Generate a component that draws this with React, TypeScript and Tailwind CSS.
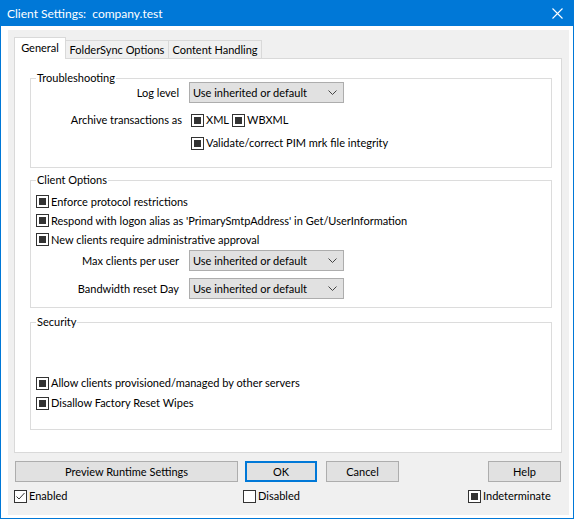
import React from "react";

const FONT = { fontFamily: '"Segoe UI", Lato, sans-serif' };

function Box({ state }: { state: "ind" | "checked" | "empty" }) {
  return (
    <span className="w-[13px] h-[13px] border border-[#333333] bg-white flex items-center justify-center shrink-0">
      {state === "ind" && <span className="w-[7px] h-[7px] bg-[#333333]" />}
      {state === "checked" && (
        <svg width="11" height="11" viewBox="0 0 11 11">
          <path d="M1.5 5.5 L4 8 L9.5 2" stroke="#333333" strokeWidth="1" fill="none" />
        </svg>
      )}
    </span>
  );
}

function Check({ label, state = "ind" }: { label: string; state?: "ind" | "checked" | "empty" }) {
  return (
    <div className="flex items-center h-[20px]">
      <Box state={state} />
      <span className="ml-[2px] whitespace-nowrap">{label}</span>
    </div>
  );
}

function Select() {
  return (
    <div className="w-[155px] h-[21px] bg-[#e1e1e1] border border-[#adadad] flex items-center pl-[3px] pr-[6px]">
      <span className="flex-1 whitespace-nowrap">Use inherited or default</span>
      <svg width="9" height="5" viewBox="0 0 9 5">
        <path d="M0.5 0.5 L4.5 4.5 L8.5 0.5" stroke="#444444" strokeWidth="1" fill="none" />
      </svg>
    </div>
  );
}

function Group({ title, className, children }: { title: string; className: string; children: React.ReactNode }) {
  return (
    <div className={"relative border border-[#dcdcdc] " + className}>
      <span className="absolute -top-[9px] left-[5px] bg-white px-[1px] leading-[16px]">{title}</span>
      {children}
    </div>
  );
}

function Btn({ children, className }: { children: React.ReactNode; className: string }) {
  return (
    <div className={"h-[21px] bg-[#e1e1e1] flex items-center justify-center " + className}>{children}</div>
  );
}

export default function App() {
  return (
    <div className="w-[576px] h-[522px] bg-white text-[11px] text-black leading-[16px]" style={FONT}>
      <div className="w-[574px] h-[519px] border border-[#0078d7] flex flex-col">
        <div className="h-[25px] bg-[#0078d7] flex items-center justify-between pl-[6px] pr-[10px] text-white text-[12px]">
          <span className="whitespace-pre">Client Settings:  company.test</span>
          <svg width="11" height="11" viewBox="0 0 11 11">
            <path d="M0.5 0.5 L10.5 10.5 M10.5 0.5 L0.5 10.5" stroke="white" strokeWidth="1.1" fill="none" />
          </svg>
        </div>
        <div className="flex-1 bg-white pl-[7px] pr-[4px] pt-[4px] pb-[3px] flex">
          <div className="flex-1 bg-[#f0f0f0] flex flex-col">
            <div className="pl-[6px] pr-[7px] pt-[6px]">
              <div className="flex items-end h-[22px]">
                <div className="relative z-10 w-[52px] h-[22px] -mb-px bg-white border border-b-0 border-[#d9d9d9] flex items-center justify-center pb-[2px]">
                  General
                </div>
                <div className="w-[104px] h-[18px] -ml-px border border-b-0 border-[#d9d9d9] flex items-center justify-center">
                  FolderSync Options
                </div>
                <div className="w-[94px] h-[18px] -ml-px border border-b-0 border-[#d9d9d9] flex items-center justify-center">
                  Content Handling
                </div>
              </div>
              <div className="h-[395px] bg-white border border-[#d9d9d9] pl-[15px] pr-[9px] pt-[19px]">
                <Group title="Troubleshooting" className="h-[90px] pt-[3px]">
                  <div className="flex items-center h-[21px]">
                    <span className="w-[148px] text-right">Log level</span>
                    <div className="ml-[10px]">
                      <Select />
                    </div>
                  </div>
                  <div className="flex items-center h-[20px] mt-[7px]">
                    <span className="w-[151px] text-right whitespace-nowrap">Archive transactions as</span>
                    <div className="ml-[9px] flex items-center">
                      <div className="w-[41px]">
                        <Check label="XML" />
                      </div>
                      <Check label="WBXML" />
                    </div>
                  </div>
                  <div className="pl-[160px] mt-[3px]">
                    <Check label="Validate/correct PIM mrk file integrity" />
                  </div>
                </Group>
                <Group title="Client Options" className="h-[128px] mt-[12px] pt-[11px] pl-[5px]">
                  <div className="flex flex-col">
                    <div className="h-[19px] flex items-center">
                      <Check label="Enforce protocol restrictions" />
                    </div>
                    <div className="h-[19px] flex items-center">
                      <Check label="Respond with logon alias as 'PrimarySmtpAddress' in Get/UserInformation" />
                    </div>
                    <div className="h-[19px] flex items-center">
                      <Check label="New clients require administrative approval" />
                    </div>
                  </div>
                  <div className="flex items-center h-[21px] mt-[1px] -ml-[5px]">
                    <span className="w-[148px] text-right">Max clients per user</span>
                    <div className="ml-[10px]">
                      <Select />
                    </div>
                  </div>
                  <div className="flex items-center h-[21px] mt-[7px] -ml-[5px]">
                    <span className="w-[148px] text-right">Bandwidth reset Day</span>
                    <div className="ml-[10px]">
                      <Select />
                    </div>
                  </div>
                </Group>
                <Group title="Security" className="h-[108px] mt-[14px] pt-[50px] pl-[5px]">
                  <Check label="Allow clients provisioned/managed by other servers" />
                  <Check label="Disallow Factory Reset Wipes" />
                </Group>
              </div>
            </div>
            <div className="flex items-center pl-[7px] mt-[8px]">
              <Btn className="w-[223px] border border-[#adadad]">Preview Runtime Settings</Btn>
              <Btn className="w-[72px] ml-[7px] border-2 border-[#0078d7]">OK</Btn>
              <Btn className="w-[73px] ml-[9px] border border-[#adadad]">Cancel</Btn>
              <Btn className="w-[73px] ml-[89px] border border-[#adadad]">Help</Btn>
            </div>
            <div className="flex items-center pl-[6px] mt-[4px]">
              <div className="w-[229px]">
                <Check label="Enabled" state="checked" />
              </div>
              <div className="w-[225px]">
                <Check label="Disabled" state="empty" />
              </div>
              <Check label="Indeterminate" />
            </div>
          </div>
        </div>
      </div>
    </div>
  );
}
